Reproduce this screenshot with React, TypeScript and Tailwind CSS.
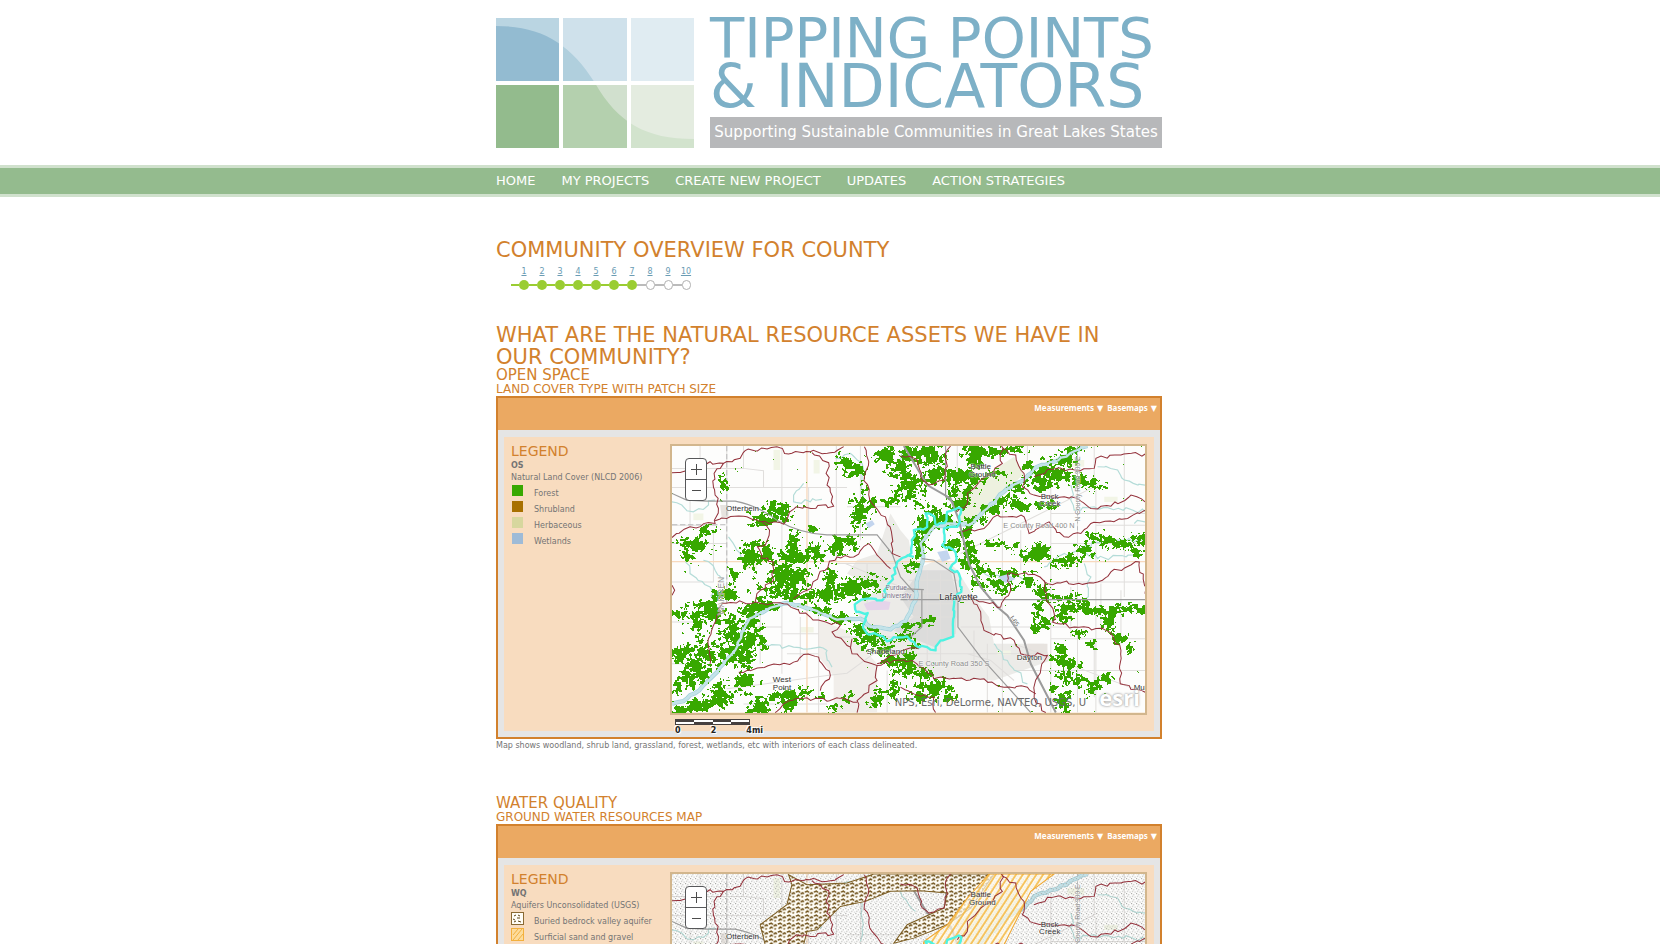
import React from "react";

type Point = [number, number];
type Blob = [number, number, number, number];

const W = 472;
const H = 266;

// Woodland patches: centre x, centre y, radius x, radius y in map units (3 per pixel).
const woodland: Blob[] = [
  [140, 300, 22, 14], [110, 340, 40, 22], [85, 375, 20, 12], [190, 160, 10, 30], [350, 245, 50, 22], [310, 270, 30, 16],
  [270, 375, 26, 32], [318, 375, 20, 24], [398, 355, 18, 45], [395, 385, 42, 16], [390, 430, 48, 38], [460, 375, 34, 22],
  [350, 480, 60, 26], [430, 495, 60, 18], [510, 495, 70, 18], [570, 475, 40, 26], [620, 465, 34, 24], [510, 445, 16, 30],
  [525, 350, 40, 24], [560, 330, 40, 16], [595, 250, 20, 36], [607, 200, 12, 34], [640, 225, 14, 16], [692, 212, 22, 10],
  [680, 75, 26, 18], [720, 110, 30, 22], [740, 160, 24, 28], [560, 100, 26, 22], [590, 115, 22, 16], [455, 295, 16, 10],
  [220, 450, 14, 34], [190, 490, 44, 14], [150, 520, 24, 14], [120, 570, 34, 40], [150, 550, 22, 12], [65, 555, 30, 12],
  [210, 600, 34, 40], [220, 640, 20, 20], [250, 590, 16, 44], [275, 555, 30, 22], [310, 525, 40, 12], [250, 650, 30, 30],
  [110, 690, 34, 46], [60, 680, 24, 20], [100, 730, 40, 26], [150, 665, 22, 40], [50, 770, 20, 18], [185, 670, 20, 14],
  [280, 630, 30, 26], [260, 690, 20, 20], [215, 690, 18, 20], [250, 755, 36, 20], [180, 790, 30, 30], [110, 825, 44, 18],
  [60, 830, 24, 12], [330, 805, 34, 20], [300, 830, 34, 14], [380, 795, 36, 18], [430, 785, 20, 14], [390, 820, 18, 20],
  [485, 800, 14, 10], [565, 795, 12, 14], [520, 830, 14, 10], [480, 540, 30, 8], [540, 562, 30, 10], [600, 600, 30, 18],
  [630, 630, 40, 24], [670, 650, 26, 20], [700, 690, 30, 20], [730, 700, 22, 26], [745, 720, 24, 18], [780, 740, 34, 26],
  [820, 765, 36, 20], [860, 790, 24, 18], [770, 790, 20, 14], [650, 800, 20, 20], [700, 775, 14, 28],
  [745, 70, 30, 28], [800, 60, 36, 16], [820, 80, 36, 22], [840, 130, 38, 18], [800, 150, 44, 14], [745, 180, 34, 26],
  [890, 135, 44, 18], [930, 90, 22, 22], [945, 60, 30, 16], [1010, 65, 34, 12], [1060, 55, 38, 10], [930, 140, 36, 18],
  [1000, 130, 34, 10], [880, 180, 16, 20], [920, 190, 30, 18], [900, 220, 30, 16], [820, 245, 34, 18], [850, 265, 30, 18],
  [790, 290, 26, 24], [780, 325, 20, 32], [765, 365, 12, 24], [755, 405, 16, 14], [870, 345, 22, 16], [940, 270, 36, 8],
  [990, 235, 34, 10], [1030, 215, 36, 14], [1080, 225, 50, 12], [1130, 225, 36, 12], [1070, 165, 30, 14], [1120, 145, 42, 14],
  [1150, 160, 40, 16], [1190, 140, 50, 14], [1240, 150, 40, 14], [1160, 120, 30, 14], [1200, 90, 36, 14], [1100, 105, 18, 12],
  [1290, 160, 30, 12], [1240, 60, 30, 10], [910, 310, 14, 18], [930, 350, 20, 18], [920, 400, 26, 24], [950, 420, 28, 14],
  [990, 340, 34, 10], [1060, 350, 20, 8], [1120, 380, 40, 14], [1140, 360, 22, 16], [1190, 390, 46, 14], [1230, 380, 28, 18],
  [1270, 360, 40, 14], [1290, 320, 20, 14], [1330, 335, 38, 12], [1380, 340, 30, 14], [1420, 330, 34, 18], [1430, 365, 20, 10],
  [1040, 430, 60, 12], [1000, 450, 40, 12], [960, 460, 22, 10], [1020, 480, 30, 12], [1100, 450, 30, 14], [1140, 480, 26, 22],
  [1160, 500, 24, 14], [1130, 540, 18, 34], [1150, 570, 20, 16], [1120, 585, 14, 18], [1210, 500, 34, 12], [1220, 530, 40, 18],
  [1200, 560, 30, 14], [1250, 515, 22, 10], [1300, 540, 40, 10], [1350, 545, 30, 12], [1400, 535, 30, 10], [1440, 540, 20, 8],
  [1340, 575, 14, 26], [1370, 620, 18, 16], [1400, 650, 14, 14], [1200, 680, 20, 30], [1220, 700, 30, 20], [1210, 740, 28, 22],
  [1250, 750, 16, 14], [1210, 810, 18, 34], [1180, 770, 12, 14], [1300, 770, 20, 14], [1330, 740, 16, 12], [1290, 640, 16, 12],
  [1250, 610, 16, 10], [800, 570, 20, 8], [750, 585, 30, 8], [735, 620, 18, 14], [755, 640, 16, 12],
];

const river: Point[] = [
  [36, 820], [70, 812], [105, 788], [150, 745], [190, 700], [225, 660], [245, 610], [268, 565], [320, 538], [380, 518],
  [430, 530], [480, 548], [530, 568], [600, 565], [630, 590], [690, 597], [735, 572], [765, 510], [772, 440], [788, 380],
  [780, 340], [820, 290], [870, 280], [925, 285], [980, 235], [1040, 175], [1090, 150], [1120, 115], [1180, 95], [1250, 60], [1280, 48],
];

const hash = (x: number, y: number) => {
  let n = Math.imul(x, 374761393) ^ Math.imul(y, 668265263);
  n = Math.imul(n ^ (n >>> 13), 1274126177);
  return ((n ^ (n >>> 16)) >>> 0) / 4294967296;
};

const noise = (x: number, y: number) => {
  const ix = Math.floor(x);
  const iy = Math.floor(y);
  const fx = x - ix;
  const fy = y - iy;
  const top = hash(ix, iy) * (1 - fx) + hash(ix + 1, iy) * fx;
  const bottom = hash(ix, iy + 1) * (1 - fx) + hash(ix + 1, iy + 1) * fx;
  return top * (1 - fy) + bottom * fy;
};

function buildCover() {
  const field = new Float32Array(W * H);
  woodland.forEach(([cx, cy, rx, ry]) => {
    const px = (cx - 36) / 3;
    const py = (cy - 48) / 3;
    const ax = (rx / 3) * 1.8 + 1;
    const ay = (ry / 3) * 1.8 + 1;
    for (let y = Math.max(0, Math.floor(py - ay)); y < Math.min(H, py + ay); y++) {
      for (let x = Math.max(0, Math.floor(px - ax)); x < Math.min(W, px + ax); x++) {
        const d = Math.sqrt(((x - px) / ax) ** 2 + ((y - py) / ay) ** 2);
        if (d < 1) field[y * W + x] = Math.max(field[y * W + x], (1 - d) * 0.62);
      }
    }
  });
  let d = "";
  for (let y = 0; y < H; y++) {
    let start = -1;
    for (let x = 0; x <= W; x++) {
      const n = noise(x / 6, y / 6) * 0.3 + noise(x / 2.6 + 90, y / 2.6) * 0.4 + noise(x / 1.3, y / 1.3 + 70) * 0.3;
      const v = (n - 0.5) * 1.5 + 0.5;
      const on = x < W && field[y * W + x] + v > (field[y * W + x] > 0 ? 0.82 : 0.98);
      if (on && start < 0) start = x;
      if (!on && start >= 0) {
        d += `M${start * 3 + 36} ${y * 3 + 48}h${(x - start) * 3}v3h${(start - x) * 3}z`;
        start = -1;
      }
    }
  }
  return d;
}

const coverPath = buildCover();

// Adds small bends between the vertices of a line.
function wiggle(points: Point[], amount: number, step = 14) {
  let d = `M${points[0][0]} ${points[0][1]}`;
  for (let i = 1; i < points.length; i++) {
    const [x0, y0] = points[i - 1];
    const [x1, y1] = points[i];
    const count = Math.max(1, Math.round(Math.hypot(x1 - x0, y1 - y0) / step));
    for (let k = 1; k <= count; k++) {
      const t = k / count;
      const a = k === count ? 0 : amount;
      const x = x0 + (x1 - x0) * t + (hash(x0 + k, y1) - 0.5) * a;
      const y = y0 + (y1 - y0) * t + (hash(x1, y0 + k) - 0.5) * a;
      d += `L${x.toFixed(1)} ${y.toFixed(1)}`;
    }
  }
  return d;
}

const watersheds: Point[][] = [
  [[36, 128], [90, 128], [150, 95], [190, 100], [240, 85], [255, 62], [350, 50], [385, 72], [450, 65], [510, 68], [550, 50]],
  [[190, 100], [162, 130], [165, 195], [175, 235], [165, 280], [90, 290], [36, 322]],
  [[165, 272], [200, 265], [260, 260], [300, 275], [370, 282], [408, 230], [520, 228], [500, 165], [505, 98], [455, 68]],
  [[305, 275], [328, 300], [315, 345], [292, 350], [305, 385], [340, 395], [340, 450], [290, 490], [285, 515], [188, 518], [145, 625], [150, 700]],
  [[285, 515], [370, 520], [450, 560], [540, 585], [515, 605], [570, 650], [575, 670], [650, 705], [650, 750], [590, 810], [590, 846]],
  [[612, 50], [625, 95], [612, 140], [635, 220], [675, 260], [695, 320], [695, 370], [720, 380]],
  [[400, 505], [440, 480], [475, 435], [530, 380], [580, 380], [625, 340], [650, 375], [690, 415]],
  [[36, 465], [44, 480], [36, 495]],
  [[236, 725], [300, 712], [400, 695], [430, 672], [475, 680], [510, 735], [480, 780]],
  [[345, 846], [370, 820], [440, 802], [500, 812], [550, 803], [590, 815]],
  [[575, 625], [570, 655]],
  [[720, 78], [770, 90], [780, 140], [805, 165], [850, 150], [860, 60], [870, 48]],
  [[1022, 48], [1025, 100], [960, 150], [920, 190], [920, 220], [890, 245]],
  [[1025, 55], [1065, 75], [1090, 130], [1085, 170], [1120, 195], [1250, 205], [1290, 235], [1350, 228], [1410, 195], [1452, 215]],
  [[1120, 140], [1160, 118], [1300, 115], [1305, 85], [1380, 75], [1452, 72]],
  [[905, 305], [970, 295], [1010, 255], [1090, 260], [1105, 310], [1165, 275], [1210, 320], [1260, 310], [1290, 280], [1400, 265], [1452, 240]],
  [[1040, 430], [1120, 432], [1160, 460], [1310, 455], [1350, 425], [1435, 395], [1452, 490]],
  [[1040, 430], [1050, 480], [1020, 530], [920, 495], [960, 545], [970, 600], [1060, 630], [1080, 670], [1160, 675], [1130, 740], [1120, 800], [1155, 846]],
  [[1150, 450], [1155, 500], [1180, 550], [1175, 575], [1240, 590], [1335, 600], [1380, 660], [1378, 760], [1452, 785]],
  [[650, 705], [700, 690], [755, 690], [820, 745], [970, 745], [1030, 770], [1100, 770], [1125, 790]],
  [[650, 700], [720, 662], [775, 655]],
  [[720, 770], [760, 790], [820, 800], [825, 846]],
];

const highways: string[] = [
  "M36 190L80 210L140 213H225Q290 225 350 270Q420 310 500 314H650L695 370L720 440L760 485",
  "M730 48L800 165L870 205L895 270L925 400L960 470L1010 530L1040 555L1090 630L1110 700L1185 846",
  "M855 48V200L880 220",
  "M784 385L820 390L880 430L892 500V590L960 680L1110 846",
  "M720 475L790 478M784 480V590L750 620M720 508H1452",
];

const roads =
  "M36 172H560M36 394H1452M200 48V520M365 48V395M250 48V115L310 122V172M528 48V394M36 455H160V300M365 520V730M200 775L500 735L560 728L650 662L720 620M475 520V846M555 400L720 470M36 285H170M530 400H720M890 48V210M1025 240V846M1170 100V846M1305 180V846M1390 48V500M1250 60V846M900 370L1310 165M1060 640L1420 775M920 670L990 690L1060 750M720 670H1130M1170 625H1452M900 590H1250M1170 340H1452M1170 455H1452M1305 285H1452M800 420V720M840 430V700M745 450H890M745 520H890M745 560H890M745 490H890M36 575H140M290 590H365M380 670H475M530 620H720M36 700H90M250 820H500M680 720V846M1300 48V180M36 115H250M120 48V172M445 172V300M600 48V330M36 340H200M90 172V290M560 230H720M620 400V520M365 610H475M300 520V700M420 560V690M1080 300V420M1230 470V620M1320 460V590M1380 480V640M1060 720H1452M1300 640V800M940 600V690M980 640V846M1170 250H1452M1100 48V120";

const creeks: Point[][] = [
  [[36, 215], [100, 245], [165, 210]],
  [[205, 320], [230, 360], [245, 390]],
  [[80, 380], [90, 430], [150, 470], [160, 510]],
  [[130, 390], [165, 420], [190, 450]],
  [[430, 160], [400, 195], [400, 215], [450, 215], [485, 208]],
  [[525, 85], [570, 70], [605, 100], [605, 180], [600, 250]],
  [[310, 640], [400, 650], [500, 660], [515, 710]],
  [[740, 48], [720, 100], [765, 160]],
  [[1230, 165], [1240, 240], [1300, 230], [1452, 245]],
  [[1310, 110], [1370, 120], [1390, 150], [1452, 165]],
  [[1150, 410], [1190, 380], [1260, 355], [1340, 330], [1452, 330]],
  [[930, 410], [990, 440], [1050, 430], [1100, 450]],
  [[1250, 360], [1310, 385], [1430, 370]],
  [[1270, 400], [1290, 440], [1275, 520]],
  [[1000, 640], [1040, 690], [1100, 760]],
  [[1420, 280], [1452, 275]],
];

const cityLimit: Point[] = [
  [760, 380], [735, 380], [710, 395], [705, 430], [680, 470], [665, 510], [620, 505], [583, 522], [588, 545], [622, 548],
  [608, 585], [620, 610], [655, 615], [680, 633], [700, 620], [740, 618], [765, 645], [800, 650], [825, 660], [840, 630], [878, 618],
  [885, 500], [902, 485], [895, 430], [868, 415], [888, 385], [880, 360], [845, 345], [850, 295], [890, 290], [900, 250],
  [895, 232], [860, 245], [858, 270], [830, 285], [815, 255], [795, 250], [800, 290], [760, 300], [755, 340], [745, 375], [735, 380],
];

interface MapLabel {
  x: number;
  y: number;
  text: string;
  size?: number;
  color?: string;
  rotate?: number;
}

const labels: MapLabel[] = [
  { x: 198, y: 242, text: "Otterbein" },
  { x: 930, y: 118, text: "Battle" },
  { x: 925, y: 141, text: "Ground" },
  { x: 1140, y: 206, text: "Buck" },
  { x: 1135, y: 229, text: "Creek" },
  { x: 836, y: 508, text: "Lafayette", size: 28 },
  { x: 618, y: 670, text: "Shadeland" },
  { x: 338, y: 754, text: "West" },
  { x: 338, y: 778, text: "Point" },
  { x: 1068, y: 688, text: "Dayton" },
  { x: 1418, y: 778, text: "Mul" },
  { x: 675, y: 480, text: "Purdue", size: 20, color: "#776f85" },
  { x: 665, y: 502, text: "University", size: 20, color: "#776f85" },
  { x: 1028, y: 294, text: "E County Road 400 N", size: 22, color: "#8b8b8b" },
  { x: 774, y: 707, text: "E County Road 350 S", size: 22, color: "#8b8b8b" },
  { x: 192, y: 554, text: "WARREN", size: 26, color: "#999999", rotate: -90 },
  { x: 1258, y: 274, text: "N County Road 900 E", size: 20, color: "#8b8b8b", rotate: -90 },
  { x: 1046, y: 562, text: "I-65", size: 20, color: "#666666", rotate: 55 },
];

const buriedArea =
  "M385 50L440 80L560 75L640 48H1000L930 150L860 200L760 240L700 255L740 200L850 150L860 105L780 98L690 100L615 130L540 145L470 215L440 220L420 300L330 320L300 200L380 140L395 80Z";
const gravelArea = "M985 48H1180L1110 100L1080 160L1030 260L980 340L760 420L790 250L860 200L920 120Z";

function AreaMap({ variant }: { variant: "cover" | "aquifer" }) {
  const cover = variant === "cover";
  return (
    <svg viewBox="36 48 1416 798" className="block w-full" role="img" aria-label={cover ? "Land cover map" : "Ground water map"}>
      <defs>
        <pattern id="stipple" width="15" height="15" patternUnits="userSpaceOnUse">
          <path d="M0 0h3v3H0zM7 3h3v3H7zM3 9h3v3H3zM11 11h3v3H11z" fill="#a2a29f" />
        </pattern>
        <pattern id="buried" width="27" height="24" patternUnits="userSpaceOnUse">
          <path d="M2 6l7 -3l5 4M16 12l6 -4l5 3M4 20l5 -5l5 3M19 22l4 -3" fill="none" stroke="#6d4f17" strokeWidth="4.5" />
        </pattern>
        <pattern id="gravel" width="17" height="17" patternUnits="userSpaceOnUse" patternTransform="rotate(33)">
          <path d="M3 0V17" stroke="#f6b73c" strokeWidth="4.5" />
        </pattern>
      </defs>
      <rect x="36" y="48" width="1416" height="798" fill="#fdfdfc" />
      <path d="M690 250L720 300L745 330L760 420L850 380L890 420L940 500L985 560L1000 640L1150 640L1170 690L1000 750L800 740L720 690L620 610L580 520L650 480L560 430L590 390L650 370Z" fill="#ecebe8" />
      <path d="M780 420L870 420L890 500L885 610L820 650L700 600L760 560L720 500Z" fill="#dcdcdb" />
      <path d="M475 570L560 600L650 700L650 846H520V735L475 680Z" fill="#f1eeea" />
      <path d="M890 190L1060 80L1090 130L960 260L900 280Z" fill="#edf1df" />
      <path d="M610 520L650 508L690 515L685 538L620 540Z" fill="#e5d4ea" />
      <path d="M180 225H205V262H185ZM1100 640H1160V690H1100Z" fill="#e7e3df" />
      <path d="M340 60h20v60h-20zM460 90h18v40h-18zM100 250h30v20h-30zM420 590h40v16h-40zM1010 660h40v14h-40zM1220 90h50v20h-50zM1330 200h40v16h-40zM250 400h40v16h-40z" fill="#f2f5e6" />
      <path d={roads} fill="none" stroke="#e0dedc" strokeWidth="3" />
      <path d="M440 48V846M36 394H1452" fill="none" stroke="#f7d9bd" strokeWidth="4" />
      <path d="M200 48V520M36 284H200M1250 48V300" fill="none" stroke="#b9b9b9" strokeWidth="3" strokeDasharray="16 8" />
      {creeks.map((c, i) => (
        <path key={i} d={wiggle(c, 14)} fill="none" stroke="#b4dcd8" strokeWidth="3.5" />
      ))}
      <path d={wiggle(river, 6)} fill="none" stroke="#a9d3dd" strokeWidth="13" />
      <path d={wiggle(river, 6)} fill="none" stroke="#dff0f3" strokeWidth="6" />
      {cover && <path d={coverPath} fill="#38a800" shapeRendering="crispEdges" />}
      <path d={wiggle(river, 6)} fill="none" stroke="#c3e3e9" strokeWidth="7" />
      <path d="M830 365l30 -5l10 25l-25 10zM1010 440l30 -8l25 14l-30 12zM615 280l20 -10l8 12l-18 12z" fill="#c3d5ee" />
      {highways.map((h, i) => (
        <path key={i} d={h} fill="none" stroke="#9b9b9b" strokeWidth={i === 1 ? 6 : 3.5} />
      ))}
      {!cover && (
        <>
          <rect x="36" y="48" width="1416" height="798" fill="url(#stipple)" />
          <path d={buriedArea} fill="#fffdf6" />
          <path d={buriedArea} fill="url(#buried)" stroke="#7c5d22" strokeWidth="3" />
          <path d={gravelArea} fill="#fff8e6" fillOpacity="0.7" />
          <path d={gravelArea} fill="url(#gravel)" stroke="#f0a62e" strokeWidth="3" />
        </>
      )}
      {watersheds.map((w, i) => (
        <path key={i} d={wiggle(w, 12)} fill="none" stroke="#93303a" strokeWidth="3" />
      ))}
      <path d={wiggle(cityLimit, 12, 12)} fill="none" stroke="#4df3e2" strokeWidth="7" strokeLinejoin="round" />
      <g fontFamily="'Liberation Sans', sans-serif" stroke="#ffffff" strokeOpacity="0.6" strokeWidth="3" paintOrder="stroke">
        {labels.map((l) => (
          <text
            key={l.text}
            x={l.x}
            y={l.y}
            fontSize={l.size ?? 24}
            fill={l.color ?? "#333333"}
            transform={l.rotate ? `rotate(${l.rotate} ${l.x} ${l.y})` : undefined}
          >
            {l.text}
          </text>
        ))}
      </g>
    </svg>
  );
}

function Logo() {
  return (
    <svg width="198" height="130" viewBox="0 0 198 130" className="shrink-0" aria-hidden="true">
      <clipPath id="under">
        <path d="M0 8C45 8 74 25 99 65C122 105 150 121 198 121V130H0Z" />
      </clipPath>
      <path d="M0 0h63v63H0z" fill="#bad5e2" />
      <path d="M67 0h64v63H67z" fill="#cfe1eb" />
      <path d="M135 0h63v63h-63z" fill="#e0ecf2" />
      <path d="M0 67h63v63H0z" fill="#93bb8d" />
      <path d="M67 67h64v63H67z" fill="#d1e0ce" />
      <path d="M135 67h63v63h-63z" fill="#e4ece0" />
      <g clipPath="url(#under)">
        <path d="M0 0h63v63H0z" fill="#93bbd1" />
        <path d="M67 0h64v63H67z" fill="#b0cfdd" />
        <path d="M67 67h64v63H67z" fill="#b4d0ae" />
        <path d="M135 67h63v63h-63z" fill="#d2e3cd" />
      </g>
    </svg>
  );
}

function LegendIcon({ kind }: { kind: string }) {
  if (kind === "buried") {
    return (
      <svg width="13" height="13" viewBox="0 0 13 13" className="shrink-0" aria-hidden="true">
        <rect x="0.5" y="0.5" width="12" height="12" fill="#fffdf6" stroke="#8a6a32" />
        <path d="M3 4l2 -1M7 3l2 1M2 7l2 1M6 6l3 0M3 10l2 -1M7 9l3 1" stroke="#5e4414" />
      </svg>
    );
  }
  if (kind === "gravel") {
    return (
      <svg width="13" height="13" viewBox="0 0 13 13" className="shrink-0" aria-hidden="true">
        <rect x="0.5" y="0.5" width="12" height="12" fill="#fddc9c" stroke="#f3b03d" />
        <path d="M2 7l5 -6M2 12l9 -11M7 12l5 -6" stroke="#f3b03d" />
      </svg>
    );
  }
  return (
    <svg width="13" height="13" viewBox="0 0 13 13" className="shrink-0" aria-hidden="true">
      <rect x="1" y="1" width="11" height="11" fill={kind} />
    </svg>
  );
}

interface PanelProps {
  variant: "cover" | "aquifer";
  code: string;
  layer: string;
  items: { kind: string; name: string }[];
}

function MapPanel({ variant, code, layer, items }: PanelProps) {
  return (
    <div className="border-2 border-[#d2812d] bg-[#e5e5e5]">
      <div className="flex h-8 justify-end gap-1 bg-[#eba962] pt-1 pr-[3px] font-['Noto_Sans','DejaVu_Sans',sans-serif] text-[8px] leading-3 font-bold text-white">
        <button type="button" className="flex h-3 gap-[3px]"><span>Measurements</span><span>▼</span></button>
        <button type="button" className="flex h-3 gap-[3px]"><span>Basemaps</span><span>▼</span></button>
      </div>
      <div className="px-[6px] pt-[7px] pb-[6px]">
        <div className="flex h-[294px] bg-[#f8dcbf] px-[7px]">
          <div className="w-[159px] shrink-0 pt-[6px] text-[8px] leading-3 text-[#747474]">
            <h4 className="text-[14px] leading-[17px] text-[#d2812d]">LEGEND</h4>
            <p className="font-bold">{code}</p>
            <p className="whitespace-nowrap">{layer}</p>
            <ul>
              {items.map((item) => (
                <li key={item.name} className="flex h-4 items-start gap-[10px]">
                  <LegendIcon kind={item.kind} />
                  <span className="pt-1 whitespace-nowrap">{item.name}</span>
                </li>
              ))}
            </ul>
          </div>
          <div className="min-w-0 flex-1 pt-[7px]">
            <div className="relative overflow-hidden border-2 border-[#d2b68d]">
              <AreaMap variant={variant} />
              <div className="absolute top-[12px] left-[13px] flex w-[22px] flex-col overflow-hidden rounded-sm border border-[#57585a] bg-white text-[#4c4c4c]">
                <button type="button" aria-label="Zoom in" className="flex h-[21px] items-center justify-center border-b border-[#57585a]">
                  <svg width="11" height="11" viewBox="0 0 11 11"><path d="M5.5 0V11M0 5.5H11" stroke="currentColor" /></svg>
                </button>
                <button type="button" aria-label="Zoom out" className="flex h-5 items-center justify-center">
                  <svg width="9" height="9" viewBox="0 0 9 9"><path d="M0 4.5H9" stroke="currentColor" /></svg>
                </button>
              </div>
              <span className="absolute right-[59px] bottom-[2px] text-[10px] leading-4 whitespace-nowrap text-[#666666]">
                NPS, Esri, DeLorme, NAVTEQ, USGS, U
              </span>
              <span className="absolute right-[5px] bottom-1 font-['Open_Sans',sans-serif] text-[22px] leading-6 font-bold text-white [text-shadow:0_0_2px_#999999,0_0_3px_#bbbbbb]">
                esri
              </span>
            </div>
            <div className="w-[93px] pt-1 pl-[5px]">
              <div className="flex h-[6px] w-[75px] border border-[#46403f] bg-white">
                <span className="h-[2px] flex-1 bg-[#46403f]" />
                <span className="h-[2px] flex-1 self-end bg-[#46403f]" />
                <span className="h-[2px] flex-1 bg-[#46403f]" />
                <span className="h-[2px] flex-1 self-end bg-[#46403f]" />
              </div>
              <div className="flex justify-between pt-px text-[8px] leading-[10px] font-bold text-[#222222] [text-shadow:1px_1px_0_#ffffff,-1px_-1px_0_#ffffff]">
                <span>0</span>
                <span>2</span>
                <span>4mi</span>
              </div>
            </div>
          </div>
        </div>
      </div>
    </div>
  );
}

const steps = [1, 2, 3, 4, 5, 6, 7, 8, 9, 10];
const nav = ["HOME", "MY PROJECTS", "CREATE NEW PROJECT", "UPDATES", "ACTION STRATEGIES"];

export default function App() {
  return (
    <div className="bg-white font-['DejaVu_Sans',sans-serif] text-[#747474]">
      <header>
        <div className="mx-auto flex max-w-[668px] gap-4 pt-[18px] pr-[2px] pb-[17px]">
          <Logo />
          <div className="flex h-[130px] min-w-0 flex-1 flex-col whitespace-nowrap text-[#7db0c7]">
            <p className="flex h-10 items-center text-[56px]">TIPPING POINTS</p>
            <p className="flex h-14 items-center text-[60px]">&amp; INDICATORS</p>
            <p className="mt-auto flex h-[31px] items-center justify-center bg-[#b7b8ba] text-[15px] text-white">
              Supporting Sustainable Communities in Great Lakes States
            </p>
          </div>
        </div>
        <nav className="border-y-[3px] border-[#d0e1cd] bg-[#94bb8e]">
          <ul className="mx-auto flex h-[26px] max-w-[668px] items-center gap-[26px] text-[13px] whitespace-nowrap text-white">
            {nav.map((item) => (
              <li key={item}>
                <a href="#">{item}</a>
              </li>
            ))}
          </ul>
        </nav>
      </header>
      <main className="mx-auto max-w-[668px] pt-[42px] pr-[2px]">
        <h1 className="text-[21px] leading-[22px] text-[#d2812d]">COMMUNITY OVERVIEW FOR COUNTY</h1>
        <ol className="flex pt-[5px] pl-[15px]">
          {steps.map((n) => (
            <li key={n} className="flex w-[18px] flex-col">
              <a href="#" className="flex w-[10px] justify-center self-end text-[8px] leading-3 text-[#6a9cb4] underline">{n}</a>
              <span className="flex h-[14px] items-center">
                <span className={n < 8 ? "h-[2px] flex-1 bg-[#9acd32]" : "h-[2px] flex-1 bg-[#bbbbbb]"} />
                <span className={n < 8 ? "size-[10px] rounded-full bg-[#9acd32]" : "h-[10px] w-[9px] rounded-full border border-[#b0b0b0]"} />
              </span>
            </li>
          ))}
        </ol>
        <section className="pt-8">
          <h2 className="pr-4 text-[21px] leading-[22px] text-[#d2812d]">WHAT ARE THE NATURAL RESOURCE ASSETS WE HAVE IN OUR COMMUNITY?</h2>
          <h3 className="text-[15px] leading-[15px] text-[#d2812d]">OPEN SPACE</h3>
          <h3 className="pb-px text-[12px] leading-3 text-[#d2812d]">LAND COVER TYPE WITH PATCH SIZE</h3>
          <MapPanel
            variant="cover"
            code="OS"
            layer="Natural Land Cover (NLCD 2006)"
            items={[
              { kind: "#38a800", name: "Forest" },
              { kind: "#a87000", name: "Shrubland" },
              { kind: "#d7d79e", name: "Herbaceous" },
              { kind: "#9ebbd7", name: "Wetlands" },
            ]}
          />
          <p className="pt-px text-[8px] leading-3">
            Map shows woodland, shrub land, grassland, forest, wetlands, etc with interiors of each class delineated.
          </p>
        </section>
        <section className="pt-11">
          <h3 className="text-[15px] leading-[15px] text-[#d2812d]">WATER QUALITY</h3>
          <h3 className="pb-px text-[12px] leading-3 text-[#d2812d]">GROUND WATER RESOURCES MAP</h3>
          <MapPanel
            variant="aquifer"
            code="WQ"
            layer="Aquifers Unconsolidated (USGS)"
            items={[
              { kind: "buried", name: "Buried bedrock valley aquifer" },
              { kind: "gravel", name: "Surficial sand and gravel" },
            ]}
          />
        </section>
      </main>
    </div>
  );
}
